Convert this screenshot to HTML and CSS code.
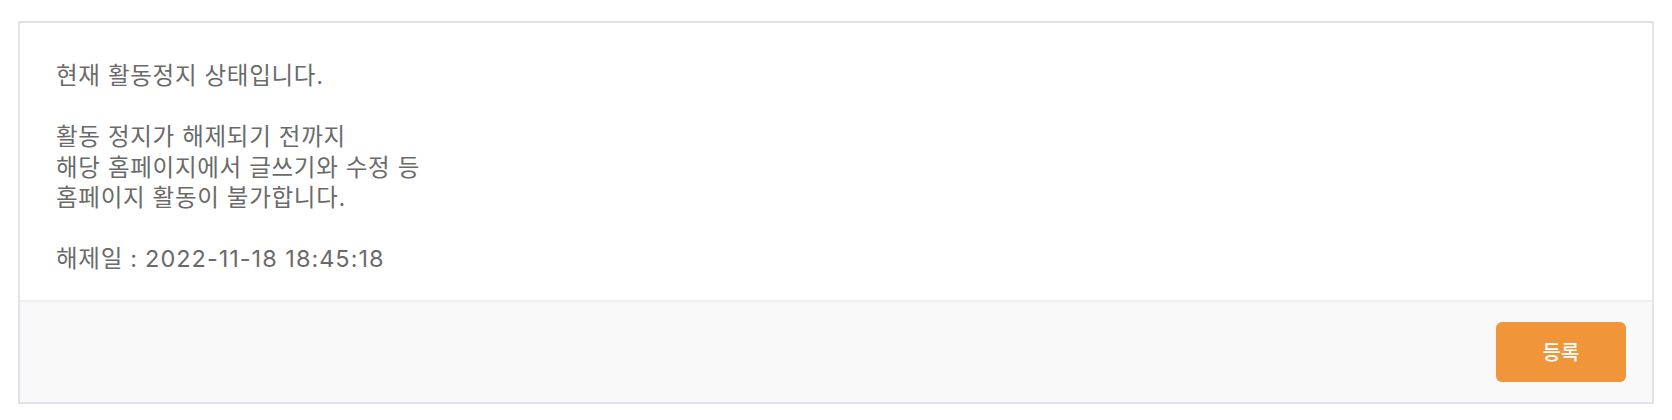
FILE: index.html
```html
<!DOCTYPE html>
<html lang="ko">
<head>
<meta charset="utf-8">
<link rel="stylesheet" href="styles.css">
</head>
<body>
<div class="card">
  <div class="card-body">
    <p class="msg">현재 활동정지 상태입니다.<br><br>활동 정지가 해제되기 전까지<br>해당 홈페이지에서 글쓰기와 수정 등<br>홈페이지 활동이 불가합니다.<br><br>해제일 : <span class="date">2022-11-18 18:45:18</span></p>
  </div>
  <div class="card-footer">
    <button class="btn-submit" type="button">등록</button>
  </div>
</div>
</body>
</html>
```

FILE: styles.css
```css
html, body {
  margin: 0;
  padding: 0;
  background: #ffffff;
}
body {
  padding: 21px 18px 0 18px;
  font-family: Inter, "Noto Sans CJK KR", sans-serif;
}
.card {
  border: 2px solid #dfe3e9;
  background: #ffffff;
  display: flex;
  flex-direction: column;
}
.card-body {
  padding: 38px 36px 25px 36px;
}
.msg {
  margin: 0;
  font-size: 23.5px;
  line-height: 30.5px;
  letter-spacing: 0.7px;
  color: #6a6a6a;
}
.date {
  letter-spacing: 1px;
}
.card-footer {
  border-top: 2px solid #eceef2;
  background: #f9f9f9;
  display: flex;
  justify-content: flex-end;
  padding: 20px 26px 20px 0;
}
.btn-submit {
  width: 130px;
  height: 60px;
  border: 0;
  border-radius: 6px;
  background: #f0953a;
  color: #ffffff;
  font-family: Inter, "Noto Sans CJK KR", sans-serif;
  font-size: 20px;
  font-weight: 500;
  padding: 0;
}
```
